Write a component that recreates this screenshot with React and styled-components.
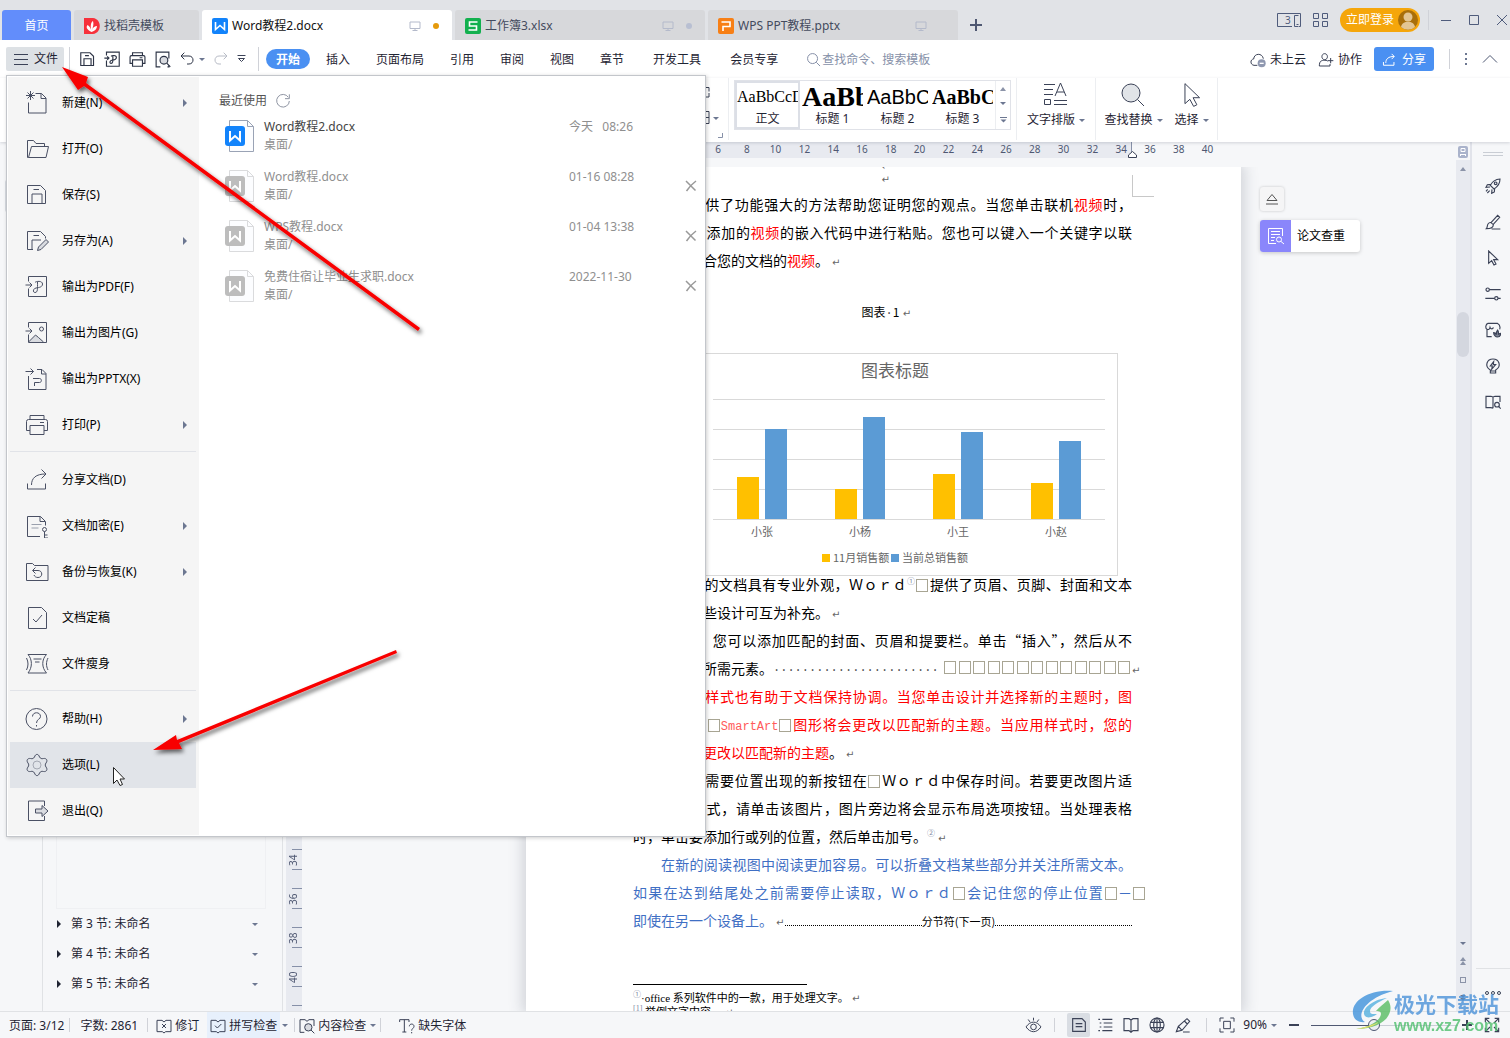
import React from "react";
import styled, { createGlobalStyle, css } from "styled-components";

const ui = `"Noto Sans", "Noto Sans CJK SC", sans-serif`;
const song = `"Noto Sans CJK SC", "Noto Sans", sans-serif`;

const Global = createGlobalStyle`
  * { box-sizing: border-box; }
  body { margin: 0; background: #f6f7f9; }
  body, button, input, select { font: 12px/18px ${ui}; color: #1f2433; }
  button { border: 0; padding: 0; background: none; }
  svg { display: block; flex: none; }
`;

/* ---------- icons ---------- */

const Svg = ({ w = 24, h = w, vb = `0 0 24 24`, c = "#3b4257", sw = 1, children }) => (
  <svg width={w} height={h} viewBox={vb} fill="none" stroke={c} strokeWidth={sw} aria-hidden="true">
    {children}
  </svg>
);

const fold = "#d9dbe0";
const shapes = {
  create: (
    <>
      <path d="M3.5 11.5v10.5h17.500V7l-4.500-4.500h-6M16 2.500v5h5" />
      <path d="M5.500 0v9M1 4.500h9M2.500 1.500l6 6M8.500 1.500l-6 6" />
    </>
  ),
  open: <path d="M3.500 20.500h-1V3.500h6l2.500 3h8.500v3M3.500 20.500l3-11h17l-2.500 11z" />,
  save: <path d="M2.500 2.500h13l5 5v13h-18zM7 20.500v-9.500h10v9.500M8.500 6.500h5.500" />,
  saveAs: (
    <>
      <path d="M8 20.500H2.500v-18h13l5 5v2M7 20v-9h9M8.500 6.500h5.500" />
      <path d="M12.500 21.500l1-3.500 7.500-7.500 2.500 2.500-7.500 7.500z" fill={fold} />
    </>
  ),
  pdf: (
    <>
      <path d="M3.500 6.500v-5h18v20h-18v-8M.5 10h6.500M4.500 7.500l2.500 2.500-2.500 2.500" />
      <path d="M10 7.500c1-1.500 7.500-2 7.500 1.500 0 3-3 3.500-6.500 4-3 .5-3.500 4.500-1 4.500 3 0 2.500-4 2.500-10.500" />
    </>
  ),
  image: (
    <>
      <path d="M3.500 21l7-7 3 2.500 5 4.500" fill={fold} />
      <path d="M3.500 6.500v-5h18v20h-18v-8M.5 10h6.500M4.500 7.500l2.500 2.500-2.500 2.500" />
      <circle cx="16.500" cy="8" r="2" />
    </>
  ),
  pptx: (
    <>
      <path d="M3.500 9v13.500h17.500V6.500l-4-4h-5M16.500 2.500v4.500h4.500M.5 4.500h8M5.500 1.500l3 3-3 3" />
      <path d="M8 11.500h6.500c2.500 0 2.500 4 0 4h-5v3.500" />
    </>
  ),
  print: (
    <>
      <path d="M5 6.500v-4h14v4M5 17.500H1.500v-9q0-2 2-2h17q2 0 2 2v9H19M15 9.500h4" />
      <path d="M5 12.500h14v9H5z" />
    </>
  ),
  share: <path d="M2.500 15.500v5.500h18v-5.500M6.500 17c0-7 4.500-11 14-11M16.500 1.500l4.500 4.500-4.500 4.500" />,
  lock: (
    <>
      <path d="M15 22.500H2.500v-20h13l5 5v4M15 2.500v5h5" />
      <path d="M6.500 10.500h10M6.500 14h7" stroke="#9aa0ad" />
      <circle cx="19.500" cy="15.500" r="2" />
      <path d="M19.500 17.500v6.500h3.500M19.500 21h3" />
    </>
  ),
  backup: <path d="M1.500 20.500v-17h6l2 2h13.500v15zM8 10.500h5c5 0 5 7 0 7-2 0-3.500-1-4-2.500M10.500 7.500l-3 3 3 3" />,
  final: <path d="M3.500 1.500h13l5 5v16h-18zM8 13l3 3 6-7" />,
  slim: <path d="M3 2.500h18.500c-5 5-5 13 0 18.500H3c4.500-5.500 4.500-13.500 0-18.500zM1.500 6c2 4 2 8 0 12M23 6c-2 4-2 8 0 12M8.500 7h8M10 10h4.500" />,
  help: (
    <>
      <circle cx="11.500" cy="12" r="10.500" />
      <path d="M7.500 9.500c0-5 8-5 8 0 0 3-4 2.500-4 6.500M11.500 18v1.500" />
    </>
  ),
  gear: (
    <>
      <path d="M9.500 4c1-3.500 4-3.500 5 0 1 1.500 2 2 4 1.500 3-.5 4.500 2 2.500 4.500-1 1.500-1 2.500 0 4 2 2.500.5 5-2.500 4.500-2-.5-3 0-4 1.500-1 3.500-4 3.500-5 0-1-1.500-2-2-4-1.500-3 .5-4.500-2-2.500-4.500 1-1.500 1-2.500 0-4C1 7.500 2.500 5 5.500 5.500c2 .5 3 0 4-1.500z" />
      <circle cx="12" cy="12" r="4" stroke="#a5a9b3" />
    </>
  ),
  exit: (
    <>
      <path d="M19.500 7V2h-16v19.500h16V17" />
      <path d="M10.500 10h6.500V6.500l6 5.500-6 5.500V14h-6.500z" fill={fold} />
    </>
  ),
  preview: (
    <>
      <path d="M9 22.500H3v-21h18v9M21 20v2.500h-2" />
      <circle cx="14" cy="13" r="5.500" fill={fold} />
      <path d="M18 17l5 5.500" />
    </>
  ),
  undo: <path d="M3 7.500h12c8 0 8 12 0 12h-3M8 2.500l-5 5 5 5" />,
  redo: <path d="M21 7.500H9c-8 0-8 12 0 12h3M16 2.500l5 5-5 5" />,
  search: (
    <>
      <circle cx="10.500" cy="10.500" r="8" />
      <path d="M16.500 16.500l6 6" />
    </>
  ),
  cloud: (
    <>
      <path d="M11 20H6C0 19 0 11 5.500 10.500 6 1.500 18.500 1 20 10" />
      <circle cx="17.500" cy="17" r="6" fill="#8f98b0" stroke="none" />
      <path d="M14.500 17h6" stroke="#fff" strokeWidth="2" />
    </>
  ),
  person: <path d="M10 11.500c-5.500 0-5.500-9 0-9s5.500 9 0 9zM2 21c0-8 3.500-8.500 8-8.500 3 0 4 .5 5 1.500M2 21h16v-3M19 9v8M15 13h8" />,
  monitor: <path d="M2 4h20v13H2zM12 17v4M7 21h10" />,
  refresh: <path d="M20 6.500A9.500 9.500 0 1 0 21.500 12M21.500 2v6.500H15" />,
  bookX: <path d="M9 3.500H1.500v17h8l2.500 2 2.500-2h8v-17H15L12 6 9 3.500zM9 9l6 6M15 9l-6 6" />,
  bookCheck: <path d="M9 3.500H1.500v17h8l2.500 2 2.500-2h8v-17H15L12 6 9 3.500zM7.500 11.500l3.500 3.500 6-6" />,
  bookFind: (
    <>
      <path d="M8 21.500H1.500v-19H9L12 5l3-2.500h7.500V12" />
      <circle cx="14" cy="14" r="5.500" fill={fold} />
      <path d="M18 18l5 5" />
    </>
  ),
  font: <path d="M1 6V2.500h14V6M8 2.500V21M5 21h6M15.500 12.500c0-4.500 7-4.500 7 0 0 3-3.500 3-3.500 6.500M19 21v2" />,
  eye: (
    <>
      <path d="M1.500 14c6-9 15-9 21 0-6 9-15 9-21 0zM12 1v4M4.500 3.500L7 7M19.500 3.500L17 7" />
      <circle cx="12" cy="14" r="4" />
    </>
  ),
  pageView: <path d="M2.500 2.500h14l5 5v14h-19zM7 10h10M7 14.500h10" />,
  outline: <path d="M2 3.500h2.500M8 3.500h15M4 9h2.500M10 9h13M4 15h2.500M10 15h13M2 20.500h2.500M8 20.500h15" />,
  book: <path d="M9 2.500H1.500v18H9l3 2.500 3-2.500h7.500v-18H15l-3 2-3-2zM12 5v17" />,
  globe: (
    <>
      <circle cx="12" cy="12" r="10.500" />
      <ellipse cx="12" cy="12" rx="5" ry="10.500" />
      <path d="M12 1.500v21M2.500 8h19M2.500 16h19" />
    </>
  ),
  pen: <path d="M2 22l3-8L18 2.500l4 4L10.500 20 2 22zM5 14l5.500 6M12 22.500h10M14 6l4.500 4.500" />,
  fit: <path d="M1.500 7V1.500H7M17 1.500h5.500V7M22.500 17v5.500H17M7 22.500H1.500V17M7 6.500h10v11H7z" />,
  full: <path d="M2 8V2h6M2 2l7 7M16 2h6v6M22 2l-7 7M2 16v6h6M2 22l7-7M22 16v6h-6M22 22l-7-7" />,
  rocket: (
    <>
      <path d="M8 11c3-6 7-9 14.500-9.500C22.500 9 19 13 13.500 16.500l-5.500-5.500zM9 9.500L3.500 10 1.500 14l6-.5M14.500 15.500L14 21l-4 2 .5-6M4 17l-2.500 3M7 19l-3.500 3.500" />
      <circle cx="16" cy="8" r="2" />
    </>
  ),
  brush: <path d="M9 13L19 2l3 3-10 11M9 13l3.500 3c0 5-4 6-10.500 6 2-2 1-5 2.500-7s3-2.500 4.500-2zM10 22.500h13" />,
  pointer: <path d="M5.500 1.500v18.500l4.500-4 3.500 6.500 3-1.500-3.500-6.500h6z" />,
  sliders: (
    <>
      <circle cx="4" cy="5.500" r="2.500" />
      <circle cx="17" cy="18.500" r="2.500" />
      <path d="M6.500 5.500h17M.5 18.500h14M19.500 18.500h4" />
    </>
  ),
  shop: (
    <>
      <path d="M10 22H3V11C0 9 1 3 4.500 2h14C22 4 23 8 22 11M3 11c3 1 4-1 4.500-3 1 3 4.500 3 5 0" />
      <path d="M13 16c2 0 3 1 4 3 0-3 1-6 2-7 1.500 2 1.500 4 1 7 1-1.500 2-2 3.500-2 0 4-3 5.500-5 5.500S13 20 13 16z" fill="#7d8494" />
    </>
  ),
  bolt: <path d="M8 18C-1.500 12 3 1.500 12 1.500S25.500 12 16 18v4.500H8zM13 5.500L8 12h3l-1 5 6-7h-3.500zM8 19.500h8" />,
  bookSearch: (
    <>
      <path d="M12 4.500l-3-1H1.500v17H9l3 1M12 4.500l3-1h7.500V12M12 4.500v17" />
      <circle cx="18" cy="16" r="3.500" />
      <path d="M20.500 18.500l3 3.500" />
    </>
  ),
};

const Icon = ({ name, size = 24, color, heavy }) => (
  <Svg w={size} c={color} sw={heavy ? 24 / size + 0.2 : 24 / size}>
    {shapes[name]}
  </Svg>
);

const Logo = ({ kind, muted, size = 16 }) => {
  const fill = muted ? "#bdbdbd" : { W: "#1283fb", S: "#12b04e", P: "#f77f15", D: "#f7313b" }[kind];
  return (
    <svg width={size} height={size} viewBox="0 0 16 16" fill="none" stroke="#fff" strokeWidth="1.600" aria-hidden="true">
      {kind === "D" ? (
        <path d="M0 0h9c9 1 9 15 0 16H0z" fill={fill} stroke="none" />
      ) : (
        <rect width="16" height="16" rx="2" fill={fill} stroke="none" />
      )}
      {kind === "W" && <path d="M3.500 4v7.500L8 7.500l4.500 4V4" />}
      {kind === "S" && <path d="M12.500 4H4.500v4h7v4h-8" />}
      {kind === "P" && <path d="M3.500 4h8.500v4.500H5V13" />}
      {kind === "D" && (
        <path d="M7.500 14C2 11 2 9 3.500 7c2 1 3 3 4 6C6 8 7 4 9 3c1 3 0 6-1 9 1-3 3-4 5-4 0 3-2 5-5.500 6z" fill="#fff" stroke="none" />
      )}
    </svg>
  );
};

const Caret = styled.span`
  width: 0;
  height: 0;
  flex: none;
  border: 3px solid transparent;
  border-top-color: #6c7791;
  border-bottom: 0;
  ${(p) => p.$up && css`border-top: 0; border-bottom: 4px solid #8b93a8;`}
  ${(p) => p.$right && css`border: 4px solid transparent; border-left-color: ${p.$dark ? "#1f2433" : "#6c7791"}; border-right: 0;`}
`;

/* ---------- frame ---------- */

const Shell = styled.div`
  position: relative;
  display: flex;
  flex-direction: column;
  height: 100vh;
  overflow: hidden;
  background: #f6f7f9;
`;

const TitleBar = styled.header`
  display: flex;
  align-items: flex-end;
  height: 40px;
  padding: 0 3px 0 2px;
  background: #e1e3e7;
`;
const Tabs = styled.nav`
  display: flex;
  gap: 3px;
`;
const Tab = styled.button`
  display: flex;
  align-items: center;
  gap: 4px;
  width: ${(p) => p.$w || 250}px;
  height: 30px;
  padding: 1px 13px 0 10px;
  border-radius: 3px 3px 0 0;
  background: ${(p) => (p.$home ? "#628dfb" : p.$active ? "#fff" : "#d7d8db")};
  color: ${(p) => (p.$home ? "#fff" : p.$active ? "#111" : "#444b5e")};
  ${(p) => p.$home && css`justify-content: center; padding: 1px 0 0;`}
`;
const TabState = styled.span`
  display: flex;
  align-items: center;
  gap: 12px;
  margin-left: auto;
`;
const Dot = styled.i`
  width: 6px;
  height: 6px;
  border-radius: 50%;
  background: ${(p) => p.$c};
`;
const AddTab = styled.button`
  display: flex;
  align-items: center;
  height: 30px;
  margin-left: 12px;
`;
const WindowTools = styled.div`
  display: flex;
  align-items: center;
  height: 40px;
  margin-left: auto;
  gap: 12px;
`;
const LoginArea = styled.div`
  display: flex;
  align-items: center;
  gap: 8px;
`;
const Login = styled.button`
  display: flex;
  align-items: center;
  justify-content: space-between;
  width: 80px;
  height: 24px;
  padding: 0 2px 0 6px;
  border-radius: 12px;
  background: #f5a60b;
  color: #fff;
`;
const WindowButtons = styled.div`
  display: flex;
  align-items: center;
  gap: 18px;
`;
const Divider = styled.span`
  flex: none;
  width: 1px;
  height: ${(p) => p.$h || 20}px;
  margin: 0 ${(p) => p.$m || 0}px;
  background: #d0d2d8;
`;

const MenuBar = styled.div`
  display: flex;
  align-items: center;
  flex: none;
  height: 38px;
  padding: 0 10px 0 6px;
  background: #fff;
`;
const FileButton = styled.button`
  display: flex;
  align-items: center;
  gap: 6px;
  width: 58px;
  height: 24px;
  padding-left: 8px;
  border-radius: 2px;
  background: #dde1e5;
`;
const QuickTools = styled.div`
  display: flex;
  align-items: center;
  gap: 8px;
  padding: 0 12px 0 4px;
`;
const QuickButton = styled.button`
  display: flex;
  align-items: center;
  gap: 4px;
`;
const RibbonTabs = styled.nav`
  display: flex;
  gap: 6px;
  margin-left: 7px;
`;
const RibbonTab = styled.button`
  height: 20px;
  padding: 1px 10px 0;
  border-radius: 10px;
  ${(p) => p.$wide && css`margin-left: 3px;`}
  ${(p) => p.$active && css`background: #4a90f2; color: #fff; font-weight: 700;`}
`;
const Search = styled.label`
  display: flex;
  align-items: center;
  gap: 1px;
  margin-left: 18px;
`;
const SearchInput = styled.input`
  width: 130px;
  padding: 1px 0 0;
  border: 0;
  outline: 0;
  &::placeholder { color: #8690a8; opacity: 1; }
`;
const Account = styled.div`
  display: flex;
  align-items: center;
  gap: 12px;
  margin-left: auto;
`;
const AccountButton = styled.button`
  display: flex;
  align-items: center;
  gap: 4px;
  padding-top: 1px;
`;
const ShareButton = styled(AccountButton)`
  gap: 6px;
  width: 60px;
  height: 24px;
  padding-left: 8px;
  border-radius: 3px;
  background: #4a90f2;
  color: #fff;
`;

const Ribbon = styled.div`
  position: relative;
  z-index: 1;
  display: flex;
  flex: none;
  height: 64px;
  background: #fff;
  box-shadow: 0 1px 3px rgba(40, 50, 70, 0.18);
`;
const Group = styled.div`
  display: flex;
  align-items: flex-start;
  justify-content: ${(p) => (p.$end ? "flex-end" : "center")};
  gap: 12px;
  width: ${(p) => p.$w}px;
  height: 62px;
  padding: ${(p) => p.$pad || "0"};
  border-right: 1px solid #eceef1;
`;
const Gallery = styled.div`
  display: flex;
  width: 277px;
  height: 50px;
  margin-top: 2px;
  border: 1px solid #e0e2e8;
`;
const StyleCell = styled.button`
  display: flex;
  flex-direction: column;
  justify-content: flex-end;
  width: 65px;
  overflow: hidden;
  border: 2px solid ${(p) => (p.$active ? "#dcdfe6" : "transparent")};
`;
const Sample = styled.span`
  height: 28px;
  line-height: 28px;
  white-space: nowrap;
  color: #000;
  font-family: ${(p) => (p.$sans ? `"Liberation Sans", sans-serif` : `"Liberation Serif", serif`)};
  font-size: ${(p) => p.$size}px;
  font-weight: ${(p) => (p.$bold ? 700 : 400)};
`;
const StyleName = styled.span`
  width: 100%;
  line-height: 16px;
  text-align: center;
`;
const GalleryScroll = styled.div`
  display: flex;
  flex: 1;
  flex-direction: column;
  align-items: center;
  justify-content: space-around;
  border-left: 1px solid #eceef1;
`;
const BigButton = styled.button`
  display: flex;
  flex-direction: column;
  align-items: center;
  gap: 3px;
  padding-top: 4px;
`;
const BigLabel = styled.span`
  display: flex;
  align-items: center;
  gap: 4px;
`;

/* ---------- workspace ---------- */

const Workspace = styled.div`
  display: flex;
  flex: 1;
  min-height: 0;
`;
const Rail = styled.aside`
  flex: none;
  width: 43px;
  padding: 38px 5px;
  border-right: 1px solid #e0e2e5;
`;
const RailButton = styled.button`
  display: block;
  width: 32px;
  height: 32px;
  border-radius: 2px;
  background: #d8dce2;
`;
const NavPane = styled.aside`
  display: flex;
  flex: none;
  flex-direction: column;
  width: 240px;
  padding: 0 13px 12px;
  border-right: 1px solid #e0e2e5;
`;
const Thumb = styled.div`
  flex: 1;
  width: 210px;
  border: 1px solid #eff0f3;
`;
const Section = styled.button`
  display: flex;
  align-items: center;
  height: 30px;
  padding: 0 11px 0 1px;
  gap: 10px;
  & > :last-child { margin-left: auto; }
`;
const VRuler = styled.div`
  display: flex;
  flex: none;
  flex-direction: column;
  justify-content: flex-end;
  align-items: flex-end;
  width: 16px;
  margin-left: 3px;
  padding-bottom: 5px;
  overflow: hidden;
  background: #e8eaf0;
`;
const VMark = styled.span`
  display: flex;
  flex: none;
  align-items: center;
  width: 10px;
  height: ${(p) => (p.children ? 20 : 19)}px;
  border-bottom: 1px solid #8690a8;
  writing-mode: vertical-rl;
  color: #4f5872;
  font-size: 10px;
`;
const VNumber = styled.span`
  flex: none;
  width: 16px;
  height: 20px;
  margin-left: -8px;
  line-height: 16px;
  text-align: center;
  rotate: 180deg;
`;
const Canvas = styled.main`
  display: flex;
  flex: 1;
  flex-direction: column;
  min-width: 0;
  overflow: hidden;
`;
const HRuler = styled.div`
  display: grid;
  flex: none;
  grid-template-columns: 1fr 715px 1fr;
  height: 16px;
  margin-bottom: 9px;
  padding-left: 9px;
`;
const RulerText = styled.div`
  position: relative;
  display: flex;
  background: linear-gradient(to right, #e8eaf0 606px, transparent 606px);
`;
const Indent = styled.svg`
  position: absolute;
  right: 104px;
  bottom: 0;
`;
const Numbers = styled.div`
  display: grid;
  grid-template-columns: repeat(20, 1fr);
  width: 576px;
  margin-left: 120px;
  color: #4f5872;
  font-size: 10px;
  line-height: 15px;
  text-align: center;
`;
const RulerMargin = styled.div`
  background: #e8eaf0;
`;
const Desk = styled.div`
  display: flex;
  flex: 1;
  justify-content: center;
  min-height: 0;
  padding-left: 9px;
`;
const Page = styled.article`
  position: relative;
  flex: none;
  width: 715px;
  padding: 0 109px 0 107px;
  background: #fff;
  box-shadow: 0 0 14px 3px rgba(50, 60, 80, 0.2);
  clip-path: inset(0 -140px 0 -20px);
  color: #000;
  font-family: ${song};
  font-size: 14px;
`;
const MarginCorner = styled.i`
  position: absolute;
  top: 8px;
  right: 87px;
  width: 22px;
  height: 22px;
  border: solid #c8c8c8;
  border-width: 0 0 1px 1px;
`;
const HeaderLines = styled.div`
  display: flex;
  flex-direction: column;
  align-items: center;
  justify-content: flex-end;
  gap: 3px;
  height: 23px;
  padding: 0 0 5px 4px;
  overflow: hidden;
`;
const Line = styled.div`
  height: 28px;
  padding-left: ${(p) => (p.$indent ? 28 : 0)}px;
  margin-right: ${(p) => (p.$hang ? -14 : 0)}px;
  line-height: 28px;
  white-space: nowrap;
  text-align-last: ${(p) => (p.$full ? "justify" : "left")};
  color: ${(p) => p.$c || "#000"};
`;
const SpacedLine = styled.div`
  display: flex;
  align-items: baseline;
  height: 28px;
  line-height: 28px;
  white-space: nowrap;
`;
const Squares = styled.span`
  display: flex;
  flex: none;
  align-items: baseline;
  justify-content: space-between;
  width: 189px;
  margin-left: auto;
`;
const Red = styled.span`
  color: #f00;
`;
const Black = styled.span`
  color: #000;
`;
const Mark = styled.span`
  display: inline-block;
  flex: none;
  width: 9px;
  margin-left: ${(p) => (p.$hang ? 0 : 3)}px;
  margin-right: ${(p) => (p.$hang ? -9 : 0)}px;
  color: #666;
  font: 10px/10px "DejaVu Sans", sans-serif;
`;
const Space = styled.span`
  display: inline-block;
  width: 12px;
  height: 13px;
  margin: 0 1px;
  border: 1px solid #a8a593;
  vertical-align: -2px;
`;
const Ref = styled.sup`
  color: #7f8aa5;
  font-size: 8px;
  line-height: 8px;
`;
const Mono = styled.span`
  color: #ff5a5a;
  font: 12px "Liberation Mono", monospace;
`;
const Dots = styled.span`
  color: #555;
  font: 12px "Liberation Mono", monospace;
`;
const Caption = styled.div`
  margin: 24px 0 27px;
  padding-left: 8px;
  font-size: 12px;
  line-height: 28px;
  text-align: center;
`;
const Figure = styled.figure`
  width: 445px;
  height: 217px;
  margin: 0 0 0 40px;
`;
const BreakLine = styled.div`
  display: flex;
  align-items: baseline;
  line-height: 28px;
  color: #3f6fc4;
`;
const Leader = styled.i`
  flex: 1;
  border-bottom: 1px dotted #000;
`;
const BreakLabel = styled.span`
  color: #000;
  font-size: 11px;
`;
const Notes = styled.footer`
  margin-top: 49px;
  font: 11px/14px "Liberation Serif", "Noto Sans CJK SC", serif;
  &::before {
    content: "";
    display: block;
    width: 174px;
    margin-bottom: 6px;
    border-top: 1px solid #000;
  }
`;
const Floating = styled.div`
  position: absolute;
  top: 20px;
  left: calc(100% + 19px);
  display: flex;
  flex-direction: column;
  align-items: flex-start;
  gap: 9px;
`;
const Eject = styled.button`
  display: flex;
  align-items: center;
  justify-content: center;
  width: 24px;
  height: 24px;
  border-radius: 3px;
  background: #f5f5f6;
  box-shadow: 0 0 3px rgba(0, 0, 0, 0.2);
`;
const CheckPaper = styled.button`
  display: flex;
  align-items: center;
  gap: 6px;
  width: 100px;
  height: 32px;
  border-radius: 3px;
  overflow: hidden;
  background: #fff;
  box-shadow: 0 1px 4px rgba(0, 0, 0, 0.2);
  color: #000;
  font-family: ${ui};
`;
const Violet = styled.span`
  display: flex;
  align-items: center;
  justify-content: center;
  width: 31px;
  height: 32px;
  background: #8a86fb;
`;
const ScrollBar = styled.div`
  display: flex;
  flex: none;
  flex-direction: column;
  align-items: center;
  width: 16px;
  border-right: 2px solid #e1e3ea;
  padding-top: 4px;
`;
const Track = styled.div`
  display: flex;
  flex: 1;
  flex-direction: column;
  align-items: center;
  align-self: stretch;
  margin-top: 2px;
  padding: 7px 0 10px;
  background: #e8eaf0;
`;
const ScrollThumb = styled.div`
  width: 12px;
  height: 45px;
  margin: 141px 0 auto;
  border-radius: 6px;
  background: #d4d7df;
`;
const TrackButtons = styled.div`
  display: flex;
  flex-direction: column;
  align-items: center;
  gap: 12px;
`;
const Stack = styled.button`
  display: flex;
  flex-direction: column;
  align-items: center;
`;
const Square = styled.button`
  width: 6px;
  height: 6px;
  border: 1px solid #8b93a8;
`;
const ToolRail = styled.aside`
  display: flex;
  flex: none;
  flex-direction: column;
  align-items: center;
  gap: 20px;
  width: 38px;
  padding: 10px 0 16px 4px;
`;
const Grip = styled.i`
  width: 20px;
  height: 4px;
  margin-bottom: 2px;
  border: solid #c9cdd4;
  border-width: 1px 0;
`;
const RailEnd = styled.button`
  display: flex;
  justify-content: center;
  align-self: stretch;
  margin-top: auto;
  padding-top: 22px;
  border-top: 1px solid #e0e2e5;
`;

/* ---------- status bar ---------- */

const StatusBar = styled.footer`
  display: flex;
  align-items: center;
  flex: none;
  height: 27px;
  padding: 0 10px 0 9px;
  border-top: 1px solid #e0e2e5;
`;
const StatusItem = styled.button`
  display: flex;
  align-items: center;
  gap: 3px;
  height: 26px;
  padding: 1px ${(p) => p.$pad || 0}px 0;
  white-space: nowrap;
  background: ${(p) => (p.$on ? "#e7f0fc" : "none")};
`;
const StatusRight = styled.div`
  display: flex;
  align-items: center;
  margin-left: auto;
`;
const Views = styled.div`
  display: flex;
  gap: 3px;
`;
const ViewButton = styled.button`
  display: flex;
  align-items: center;
  justify-content: center;
  width: 23px;
  height: 24px;
  border-radius: 2px;
  background: ${(p) => (p.$on ? "#d9dde3" : "none")};
`;
const ZoomTools = styled.div`
  display: flex;
  align-items: center;
  gap: 4px;
`;
const ZoomValue = styled.span`
  margin-left: 4px;
`;
const StepButton = styled.button`
  padding-left: ${(p) => (p.$before ? 8 : 0)}px;
  padding-right: ${(p) => (p.$after ? 8 : 0)}px;
`;
const ZoomRange = styled.input`
  width: 147px;
  height: 14px;
  margin: 0;
  appearance: none;
  background: linear-gradient(#4f5872, #4f5872) 0 50% / 42% 1px no-repeat, linear-gradient(#c9cdd6, #c9cdd6) 0 50% / 100% 1px no-repeat;
  &::-webkit-slider-thumb {
    appearance: none;
    width: 12px;
    height: 12px;
    border: 1px solid #4f5872;
    border-radius: 50%;
    background: #eceef2;
  }
`;

/* ---------- file menu ---------- */

const FilePanel = styled.div`
  position: absolute;
  z-index: 2;
  top: 75px;
  left: 6px;
  display: flex;
  width: 700px;
  padding: 1px;
  border: 1px solid #c3c6cb;
  background: #fff;
  box-shadow: 1px 1px 4px rgba(0, 0, 0, 0.2);
`;
const Commands = styled.nav`
  width: 191px;
  padding: 3px 3px 1px 2px;
  background: #f5f5f5;
`;
const Command = styled.button`
  display: flex;
  align-items: center;
  gap: 13px;
  width: 100%;
  height: 46px;
  padding: 0 9px 0 15px;
  color: #000;
  background: ${(p) => (p.$on ? "#e1e4e9" : "none")};
  & > span:last-child:not(:nth-child(2)) { margin-left: auto; }
`;
const Rule = styled.hr`
  height: 1px;
  margin: 3px 0 5px;
  border: 0;
  background: #e1e3e8;
`;
const Recent = styled.section`
  flex: 1;
  padding: 14px 7px 0 20px;
`;
const RecentTitle = styled.h2`
  display: flex;
  align-items: center;
  gap: 8px;
  height: 20px;
  margin: 0;
  color: #555;
  font-size: 12px;
  font-weight: 400;
`;
const RecentList = styled.ul`
  margin: 0;
  padding: 0 0 0 6px;
  list-style: none;
`;
const RecentRow = styled.li`
  display: grid;
  grid-template-columns: 39px 305px 1fr 12px;
  align-items: center;
  height: 50px;
  color: #8f8f8f;
`;
const RecentName = styled.a`
  display: flex;
  flex-direction: column;
  align-self: start;
  padding-top: 7px;
  color: ${(p) => (p.$on ? "#444" : "#8f8f8f")};
  line-height: 18px;
  text-decoration: none;
`;
const Path = styled.small`
  color: #8f8f8f;
  font-size: 12px;
  line-height: 17px;
`;
const RecentDate = styled.time`
  align-self: start;
  padding-top: 7px;
  white-space: pre;
`;
const Overlay = styled.svg`
  position: absolute;
  z-index: 3;
  top: 0;
  left: 0;
  pointer-events: none;
`;
const SiteMark = styled.div`
  position: absolute;
  z-index: 3;
  right: 11px;
  bottom: 3px;
  display: flex;
  opacity: 0.8;
  pointer-events: none;
`;
const SiteText = styled.div`
  display: flex;
  flex-direction: column;
  color: #4c93d9;
  font: 700 21px/28px "Noto Sans CJK SC", sans-serif;
`;
const SiteUrl = styled.span`
  color: #4fbf6e;
  font: 700 16px/18px "Liberation Sans", sans-serif;
`;

/* ---------- data ---------- */

const commands = [
  ["create", "新建(N)", true],
  ["open", "打开(O)"],
  ["save", "保存(S)"],
  ["saveAs", "另存为(A)", true],
  ["pdf", "输出为PDF(F)"],
  ["image", "输出为图片(G)"],
  ["pptx", "输出为PPTX(X)"],
  ["print", "打印(P)", true],
  null,
  ["share", "分享文档(D)"],
  ["lock", "文档加密(E)", true],
  ["backup", "备份与恢复(K)", true],
  ["final", "文档定稿"],
  ["slim", "文件瘦身"],
  null,
  ["help", "帮助(H)", true],
  ["gear", "选项(L)"],
  ["exit", "退出(Q)"],
];
const recent = [
  ["Word教程2.docx", "今天   08:26"],
  ["Word教程.docx", "01-16 08:28"],
  ["WPS教程.docx", "01-04 13:38"],
  ["免费住宿让毕业生求职.docx", "2022-11-30"],
];
const sales = [
  ["小张", 42, 90],
  ["小杨", 30, 102],
  ["小王", 45, 87],
  ["小赵", 36, 78],
];
const ribbonTabs = ["开始", "插入", "页面布局", "引用", "审阅", "视图", "章节", "开发工具", "会员专享"];
const styleCells = [
  ["AaBbCcD", "正文", 16],
  ["AaBb", "标题 1", 28, true],
  ["AaBbC", "标题 2", 20, false, true],
  ["AaBbC", "标题 3", 20, true],
];

const SalesChart = () => (
  <svg width="445" height="223" viewBox="0 0 445 223" fontFamily='"Noto Sans CJK SC", sans-serif' fill="#666" textAnchor="middle">
    <rect x=".5" y=".5" width="444" height="222" fill="#fff" stroke="#d9d9d9" />
    <text x="222" y="24" fontSize="17">图表标题</text>
    {[0, 1, 2, 3, 4].map((n) => (
      <React.Fragment key={n}>
        <path d={`M40 ${46.5 + n * 30}h392`} stroke="#d9d9d9" />
        <text x="25" y={50 + n * 30} fontSize="10">{(4 - n) * 10}</text>
      </React.Fragment>
    ))}
    {sales.map(([who, nov, total], i) => (
      <React.Fragment key={who}>
        <rect x={64 + i * 98} y={166 - nov} width="22" height={nov} fill="#ffc000" />
        <rect x={92 + i * 98} y={166 - total} width="22" height={total} fill="#5b9bd5" />
        <text x={89 + i * 98} y="183" fontSize="11">{who}</text>
      </React.Fragment>
    ))}
    <rect x="149" y="201" width="8" height="8" fill="#ffc000" />
    <text x="160" y="209" fontSize="11" textAnchor="start">11月销售额</text>
    <rect x="218" y="201" width="8" height="8" fill="#5b9bd5" />
    <text x="229" y="209" fontSize="11" textAnchor="start">当前总销售额</text>
  </svg>
);

const FileTab = ({ kind, name, active, dot }) => (
  <Tab $active={active}>
    <Logo kind={kind} />
    {name}
    <TabState>
      <Icon name="monitor" size={12} color="#b4bacb" />
      <Dot $c={dot || "transparent"} />
    </TabState>
  </Tab>
);

const DocIcon = ({ muted }) => (
  <svg width="30" height="32" viewBox="0 0 30 32" fill="none" aria-hidden="true">
    <path d="M4.500.5h18l6 6v25h-24z" fill="#fcfdff" stroke={muted ? "#dadbdd" : "#9aa3b5"} />
    <path d="M22.500.5v6h6" stroke={muted ? "#dadbdd" : "#9aa3b5"} />
    <rect y="6" width="20" height="20" rx="3" fill={muted ? "#bdbdbd" : "#1283fb"} />
    <path d="M5 11v9.500l5-4.500 5 4.500V11" stroke="#fff" strokeWidth="2" />
  </svg>
);

export default function App() {
  return (
    <Shell lang="zh-CN">
      <Global />
      <TitleBar>
        <Tabs>
          <Tab $home $w={69}>首页</Tab>
          <Tab $w={125}><Logo kind="D" />找稻壳模板</Tab>
          <FileTab kind="W" name="Word教程2.docx" active dot="#e59a0c" />
          <FileTab kind="S" name="工作簿3.xlsx" dot="#b8bfd2" />
          <FileTab kind="P" name="WPS PPT教程.pptx" />
        </Tabs>
        <AddTab aria-label="新建标签">
          <Svg w={12} vb="0 0 12 12" sw={2} c="#4f5872"><path d="M6 0v12M0 6h12" /></Svg>
        </AddTab>
        <WindowTools>
          <Svg w={24} h={14} vb="0 0 24 14" c="#4f5c7c">
            <path d="M15 13.500H.5V.5h23v13H22M17.500 13.500v-11h4M17.500 13.500h4M19.500 11.500h2" />
            <text x="8" y="11" fontSize="10" fill="#4f5c7c" stroke="none" fontFamily="Noto Sans">3</text>
          </Svg>
          <Svg w={15} h={14} vb="0 0 15 14" c="#4f5c7c"><path d="M.5.5h5v5h-5zM9.500.5h5v5h-5zM.5 8.500h5v5h-5zM9.500 8.500h5v5h-5z" /></Svg>
          <LoginArea>
            <Login>
              立即登录
              <svg width="20" height="20" viewBox="0 0 20 20" aria-hidden="true">
                <circle cx="10" cy="10" r="10" fill="#a96f0a" />
                <circle cx="10" cy="7" r="4.500" fill="#e3c592" />
                <path d="M3 17c1-7 13-7 14 0a10 10 0 0 1-14 0z" fill="#e3c592" />
              </svg>
            </Login>
            <Divider $h={20} />
          </LoginArea>
          <WindowButtons>
            <Svg w={10} vb="0 0 10 10" c="#4f5c7c"><path d="M0 5.500h10" /></Svg>
            <Svg w={10} vb="0 0 10 10" c="#4f5c7c"><path d="M.5.5h9v9h-9z" /></Svg>
            <Svg w={10} vb="0 0 10 10" c="#4f5c7c"><path d="M0 0l10 10M10 0L0 10" /></Svg>
          </WindowButtons>
        </WindowTools>
      </TitleBar>

      <MenuBar>
        <FileButton>
          <Svg w={14} h={11} vb="0 0 14 11"><path d="M0 .5h14M0 5.500h14M0 10.500h14" /></Svg>
          文件
        </FileButton>
        <Divider $h={24} $m={5} />
        <QuickTools>
          {["save", "pdf", "print", "preview"].map((n) => (
            <QuickButton key={n} aria-label={n}><Icon name={n} size={17} heavy color="#2d3446" /></QuickButton>
          ))}
          <QuickButton aria-label="撤销"><Icon name="undo" size={16} color="#2d3446" /><Caret /></QuickButton>
          <QuickButton aria-label="恢复"><Icon name="redo" size={16} color="#b8bcc6" /></QuickButton>
          <QuickButton aria-label="更多">
            <Svg w={9} h={8} vb="0 0 9 8"><path d="M.5.5h8M1.500 3.500h6L4.500 6.500z" /></Svg>
          </QuickButton>
        </QuickTools>
        <Divider $h={24} />
        <RibbonTabs>
          {ribbonTabs.map((t, i) => <RibbonTab key={t} $active={!i} $wide={i > 6}>{t}</RibbonTab>)}
        </RibbonTabs>
        <Search>
          <Icon name="search" size={15} color="#8690a8" />
          <SearchInput aria-label="查找命令" placeholder="查找命令、搜索模板" />
        </Search>
        <Account>
          <AccountButton><Icon name="cloud" size={16} />未上云</AccountButton>
          <AccountButton><Icon name="person" size={16} />协作</AccountButton>
          <ShareButton><Icon name="share" size={14} color="#fff" />分享</ShareButton>
          <Divider $h={20} $m={3} />
          <Svg w={3} h={12} vb="0 0 3 12" c="none"><path d="M0 0h2v2H0zM0 5h2v2H0zM0 10h2v2H0z" fill="#6c7791" /></Svg>
          <Svg w={20} h={8} vb="-3 0 20 8" c="#4f5872"><path d="M0 7.500L7 .5l7 7" /></Svg>
        </Account>
      </MenuBar>

      <Ribbon>
        <Group $w={729} $end $pad="0 4px 0 0">
          <Svg w={30} h={62} vb="0 0 30 62" c="#3b4257">
            <path d="M8 9.500h7v4M15 15v4h-3M2 33.500h13v12H2M4 39.500h11" />
            <path d="M24 59.500h4.500V55" stroke="#8690a8" />
            <path d="M19 39h6l-3 3z" fill="#6c7791" stroke="none" />
          </Svg>
        </Group>
        <Group $w={288}>
          <Gallery>
            {styleCells.map(([text, name, size, bold, sans], i) => (
              <StyleCell key={name} $active={!i}>
                <Sample $size={size} $bold={bold} $sans={sans}>{text}</Sample>
                <StyleName>{name}</StyleName>
              </StyleCell>
            ))}
            <GalleryScroll><Caret $up /><Caret />
              <Svg w={7} h={6} vb="0 0 7 6" c="#6c7791"><path d="M0 .5h7" /><path d="M.5 2.500h6L3.500 5.500z" fill="#6c7791" stroke="none" /></Svg>
            </GalleryScroll>
          </Gallery>
        </Group>
        <Group $w={79}>
          <BigButton>
            <Svg w={26} vb="0 0 26 26"><path d="M1 2.500h11M1 7.500h9M1 12.500h9M1.500 17.500h6v5h-6zM11 18.500h13M11 22.500h13M12 14l5.500-13 5.500 13M14 10h7" /></Svg>
            <BigLabel>文字排版<Caret /></BigLabel>
          </BigButton>
        </Group>
        <Group $w={122}>
          <BigButton>
            <Svg w={26} vb="0 0 26 26"><circle cx="11" cy="11" r="9" fill="#e1e4e8" /><path d="M17.500 17.500l6.500 6.500" /></Svg>
            <BigLabel>查找替换<Caret /></BigLabel>
          </BigButton>
          <BigButton>
            <Icon name="pointer" size={26} />
            <BigLabel>选择<Caret /></BigLabel>
          </BigButton>
        </Group>
      </Ribbon>

      <Workspace>
        <Rail><RailButton aria-label="目录" /></Rail>
        <NavPane>
          <Thumb />
          {[3, 4, 5].map((n) => (
            <Section key={n}><Caret $right $dark />{`第 ${n} 节: 未命名`}<Caret /></Section>
          ))}
        </NavPane>
        <VRuler>
          {[34, 36, 38, 40].map((n) => (
            <React.Fragment key={n}>
              <VMark />
              <VMark><VNumber>{n}</VNumber></VMark>
            </React.Fragment>
          ))}
          <VMark />
        </VRuler>
        <Canvas>
          <HRuler>
            <RulerMargin />
            <RulerText>
              <Numbers>{Array.from({ length: 20 }, (_, i) => <span key={i}>{i * 2 + 2}</span>)}</Numbers>
              <Indent width="9" height="16" viewBox="0 0 9 16" fill="none" stroke="#3b4257" aria-hidden="true">
                <path d="M3.500 0v10" stroke="#8690a8" />
                <path d="M.5 15.500v-2.500l4-3.500 4 3.500v2.500z" fill="#fff" />
              </Indent>
            </RulerText>
          </HRuler>
          <Desk>
            <Page>
              <MarginCorner />
              <HeaderLines><Mark>↵</Mark><Mark>↵</Mark></HeaderLines>
              <Line $indent $full>视频提供了功能强大的方法帮助您证明您的观点。当您单击联机<Red>视频</Red>时，</Line>
              <Line $full>可以在想要添加的<Red>视频</Red>的嵌入代码中进行粘贴。您也可以键入一个关键字以联</Line>
              <Line>机搜索最适合您的文档的<Red>视频</Red>。<Mark>↵</Mark></Line>
              <Caption>图表<Dots>·</Dots>1<Mark>↵</Mark></Caption>
              <Figure><SalesChart /></Figure>
              <Line $indent $full>为使您的文档具有专业外观，Ｗｏｒｄ<Ref>①</Ref><Space />提供了页眉、页脚、封面和文本</Line>
              <Line>框设计，这些设计可互为补充。<Mark>↵</Mark></Line>
              <Line $indent $full>例如{"\u00a0 "}，您可以添加匹配的封面、页眉和提要栏。单击“插入”，然后从不</Line>
              <SpacedLine>
                同库中选择所需元素。<Dots>{"·".repeat(23)}</Dots>
                <Squares>{Array.from({ length: 13 }, (_, i) => <Space key={i} />)}<Mark $hang>↵</Mark></Squares>
              </SpacedLine>
              <Line $indent $full $c="#f00">主题和样式也有助于文档保持协调。当您单击设计并选择新的主题时，图</Line>
              <Line $full $c="#f00">片、图表或<Space /><Mono>SmartArt</Mono><Space />图形将会更改以匹配新的主题。当应用样式时，您的</Line>
              <Line $c="#f00">标题会进行更改以匹配新的主题<Black>。</Black><Mark>↵</Mark></Line>
              <Line $indent $full>使用在需要位置出现的新按钮在<Space />Ｗｏｒｄ中保存时间。若要更改图片适</Line>
              <Line $full>应文档的方式，请单击该图片，图片旁边将会显示布局选项按钮。当处理表格</Line>
              <Line>时，单击要添加行或列的位置，然后单击加号。<Ref>②</Ref><Mark>↵</Mark></Line>
              <Line $indent $full $c="#3f6fc4">在新的阅读视图中阅读更加容易。可以折叠文档某些部分并关注所需文本。</Line>
              <Line $full $hang $c="#3f6fc4">如果在达到结尾处之前需要停止读取，Ｗｏｒｄ<Space />会记住您的停止位置<Space />－<Space /></Line>
              <BreakLine>
                即使在另一个设备上。<Mark>↵</Mark><Leader /><BreakLabel>分节符(下一页)</BreakLabel><Leader />
              </BreakLine>
              <Notes>
                <div><Ref>①</Ref>·office 系列软件中的一款，用于处理文字。<Mark>↵</Mark></div>
                <div><Ref>[1]</Ref> 举例文字内容。<Mark>↵</Mark></div>
              </Notes>
              <Floating>
                <Eject aria-label="收起">
                  <Svg w={12} vb="0 0 12 12" c="#555"><path d="M1 7.500L6 1.500l5 6zM0 11h12" /></Svg>
                </Eject>
                <CheckPaper>
                  <Violet>
                    <Svg w={18} vb="0 0 18 18" c="#fff"><path d="M9 16.500H1.500v-15h14V9M4 4.500h9M4 7.500h9M4 10.500h4M4 13.500h3" /><circle cx="12" cy="12.500" r="2.500" /><path d="M14 14.500l3 2.500" /></Svg>
                  </Violet>
                  论文查重
                </CheckPaper>
              </Floating>
            </Page>
          </Desk>
        </Canvas>
        <ScrollBar>
          <Svg w={10} h={12} vb="0 0 10 12" c="#fff"><rect width="10" height="12" rx="2" fill="#aab3cb" stroke="none" /><path d="M3 2.500h4v3H3zM2 8.500h6M2.500 8v2M7.500 8v2" /></Svg>
          <Track>
            <Caret $up />
            <ScrollThumb />
            <TrackButtons>
              <Caret />
              <Stack aria-label="上一页"><Caret $up /><Caret $up /></Stack>
              <Square aria-label="选择浏览对象" />
              <Stack aria-label="下一页"><Caret /><Caret /></Stack>
            </TrackButtons>
          </Track>
        </ScrollBar>
        <ToolRail>
          <Grip />
          {["rocket", "brush", "pointer", "sliders", "shop", "bolt", "bookSearch"].map((n) => (
            <QuickButton key={n} aria-label={n}><Icon name={n} size={16} heavy /></QuickButton>
          ))}
          <RailEnd aria-label="更多工具">
            <Svg w={16} h={4} vb="0 0 16 4"><circle cx="2" cy="2" r="1.500" /><circle cx="8" cy="2" r="1.500" /><circle cx="14" cy="2" r="1.500" /></Svg>
          </RailEnd>
        </ToolRail>
      </Workspace>

      <StatusBar>
        <StatusItem>页面: 3/12</StatusItem>
        <Divider $h={14} $m={5} />
        <StatusItem $pad={5}>字数: 2861</StatusItem>
        <Divider $h={14} $m={4} />
        <StatusItem $pad={4}><Icon name="bookX" size={16} />修订</StatusItem>
        <StatusItem aria-hidden="true" $pad={2} />
        <StatusItem $on $pad={3}><Icon name="bookCheck" size={16} />拼写检查</StatusItem>
        <StatusItem aria-label="拼写选项" $pad={2}><Caret /></StatusItem>
        <Divider $h={14} $m={4} />
        <StatusItem><Icon name="bookFind" size={16} />内容检查</StatusItem>
        <StatusItem aria-label="检查选项" $pad={4}><Caret /></StatusItem>
        <Divider $h={14} />
        <StatusItem $pad={18}><Icon name="font" size={16} />缺失字体</StatusItem>
        <StatusRight>
          <Icon name="eye" size={17} />
          <Divider $h={14} $m={12} />
          <Views>
            {["pageView", "outline", "book", "globe", "pen"].map((n, i) => (
              <ViewButton key={n} $on={!i} aria-label={n}><Icon name={n} size={16} heavy /></ViewButton>
            ))}
          </Views>
          <Divider $h={14} $m={12} />
          <ZoomTools>
            <Icon name="fit" size={16} />
            <ZoomValue>90%</ZoomValue>
            <Caret />
            <StepButton $before $after aria-label="缩小">
              <Svg w={10} vb="0 0 10 10" sw={2}><path d="M0 5h10" /></Svg>
            </StepButton>
            <ZoomRange type="range" aria-label="缩放" defaultValue={42} />
            <StepButton $after aria-label="放大">
              <Svg w={10} vb="0 0 10 10" sw={2}><path d="M0 5h10M5 0v10" /></Svg>
            </StepButton>
            <Icon name="full" size={16} heavy />
          </ZoomTools>
        </StatusRight>
      </StatusBar>

      <FilePanel>
        <Commands>
          {commands.map((c, i) =>
            c ? (
              <Command key={c[0]} $on={c[0] === "gear"}>
                <Icon name={c[0]} color="#4a5064" />
                <span>{c[1]}</span>
                {c[2] && <Caret $right />}
              </Command>
            ) : (
              <Rule key={i} />
            )
          )}
        </Commands>
        <Recent>
          <RecentTitle>最近使用<Icon name="refresh" size={16} color="#8f95a3" /></RecentTitle>
          <RecentList>
            {recent.map(([name, date], i) => (
              <RecentRow key={name}>
                <DocIcon muted={i > 0} />
                <RecentName href="#" $on={!i}>{name}<Path>桌面/</Path></RecentName>
                <RecentDate>{date}</RecentDate>
                {i > 0 && (
                  <QuickButton aria-label="移除">
                    <Svg w={12} vb="0 0 12 12" c="#999" sw={1.5}><path d="M1 1l9.500 9.500M11 1C7 4 4 7 1.500 11" /></Svg>
                  </QuickButton>
                )}
              </RecentRow>
            ))}
          </RecentList>
        </Recent>
      </FilePanel>

      <Overlay width="430" height="800" viewBox="0 0 430 800" aria-hidden="true">
        <defs>
          <filter id="drop" x="-10%" y="-10%" width="130%" height="130%">
            <feDropShadow dx="2" dy="3" stdDeviation="2" floodColor="#000" floodOpacity=".6" />
          </filter>
        </defs>
        <g fill="#f80000" filter="url(#drop)">
          <path d="M62 67l26 10-2 6 334 245-2 3L84 86l-6 4z" />
          <path d="M153 750l23-15 1 5 219-90 1 3-218 90 3 6z" />
        </g>
        <path d="M113.500 767.500v16l3.500-3.500 3 5.500 2.500-1-2.500-5.500h4.500z" fill="#fff" stroke="#222" />
      </Overlay>

      <SiteMark>
        <svg width="43" height="44" viewBox="0 0 43 44" aria-hidden="true">
          <path d="M42 2C18 0 0 12 2 25c1 6 6 9 12 8C5 28 12 10 42 2z" fill="#3f92dc" />
          <path d="M36 9C24 10 12 18 13 25c1 5 8 4 13 0-3 0-7 1-7-3 0-4 8-9 17-13z" fill="#54b0e0" />
          <path d="M37 11c8 12-3 29-32 29 14-2 24-8 25-15 0-3-3-3-5-3 3-4 8-7 12-11z" fill="#58bd62" />
          <path d="M5 40c11 0 18-3 23-7-5 2-12 5-23 7z" fill="#e0d94a" />
        </svg>
        <SiteText>极光下载站<SiteUrl>www.xz7.com</SiteUrl></SiteText>
      </SiteMark>
    </Shell>
  );
}
